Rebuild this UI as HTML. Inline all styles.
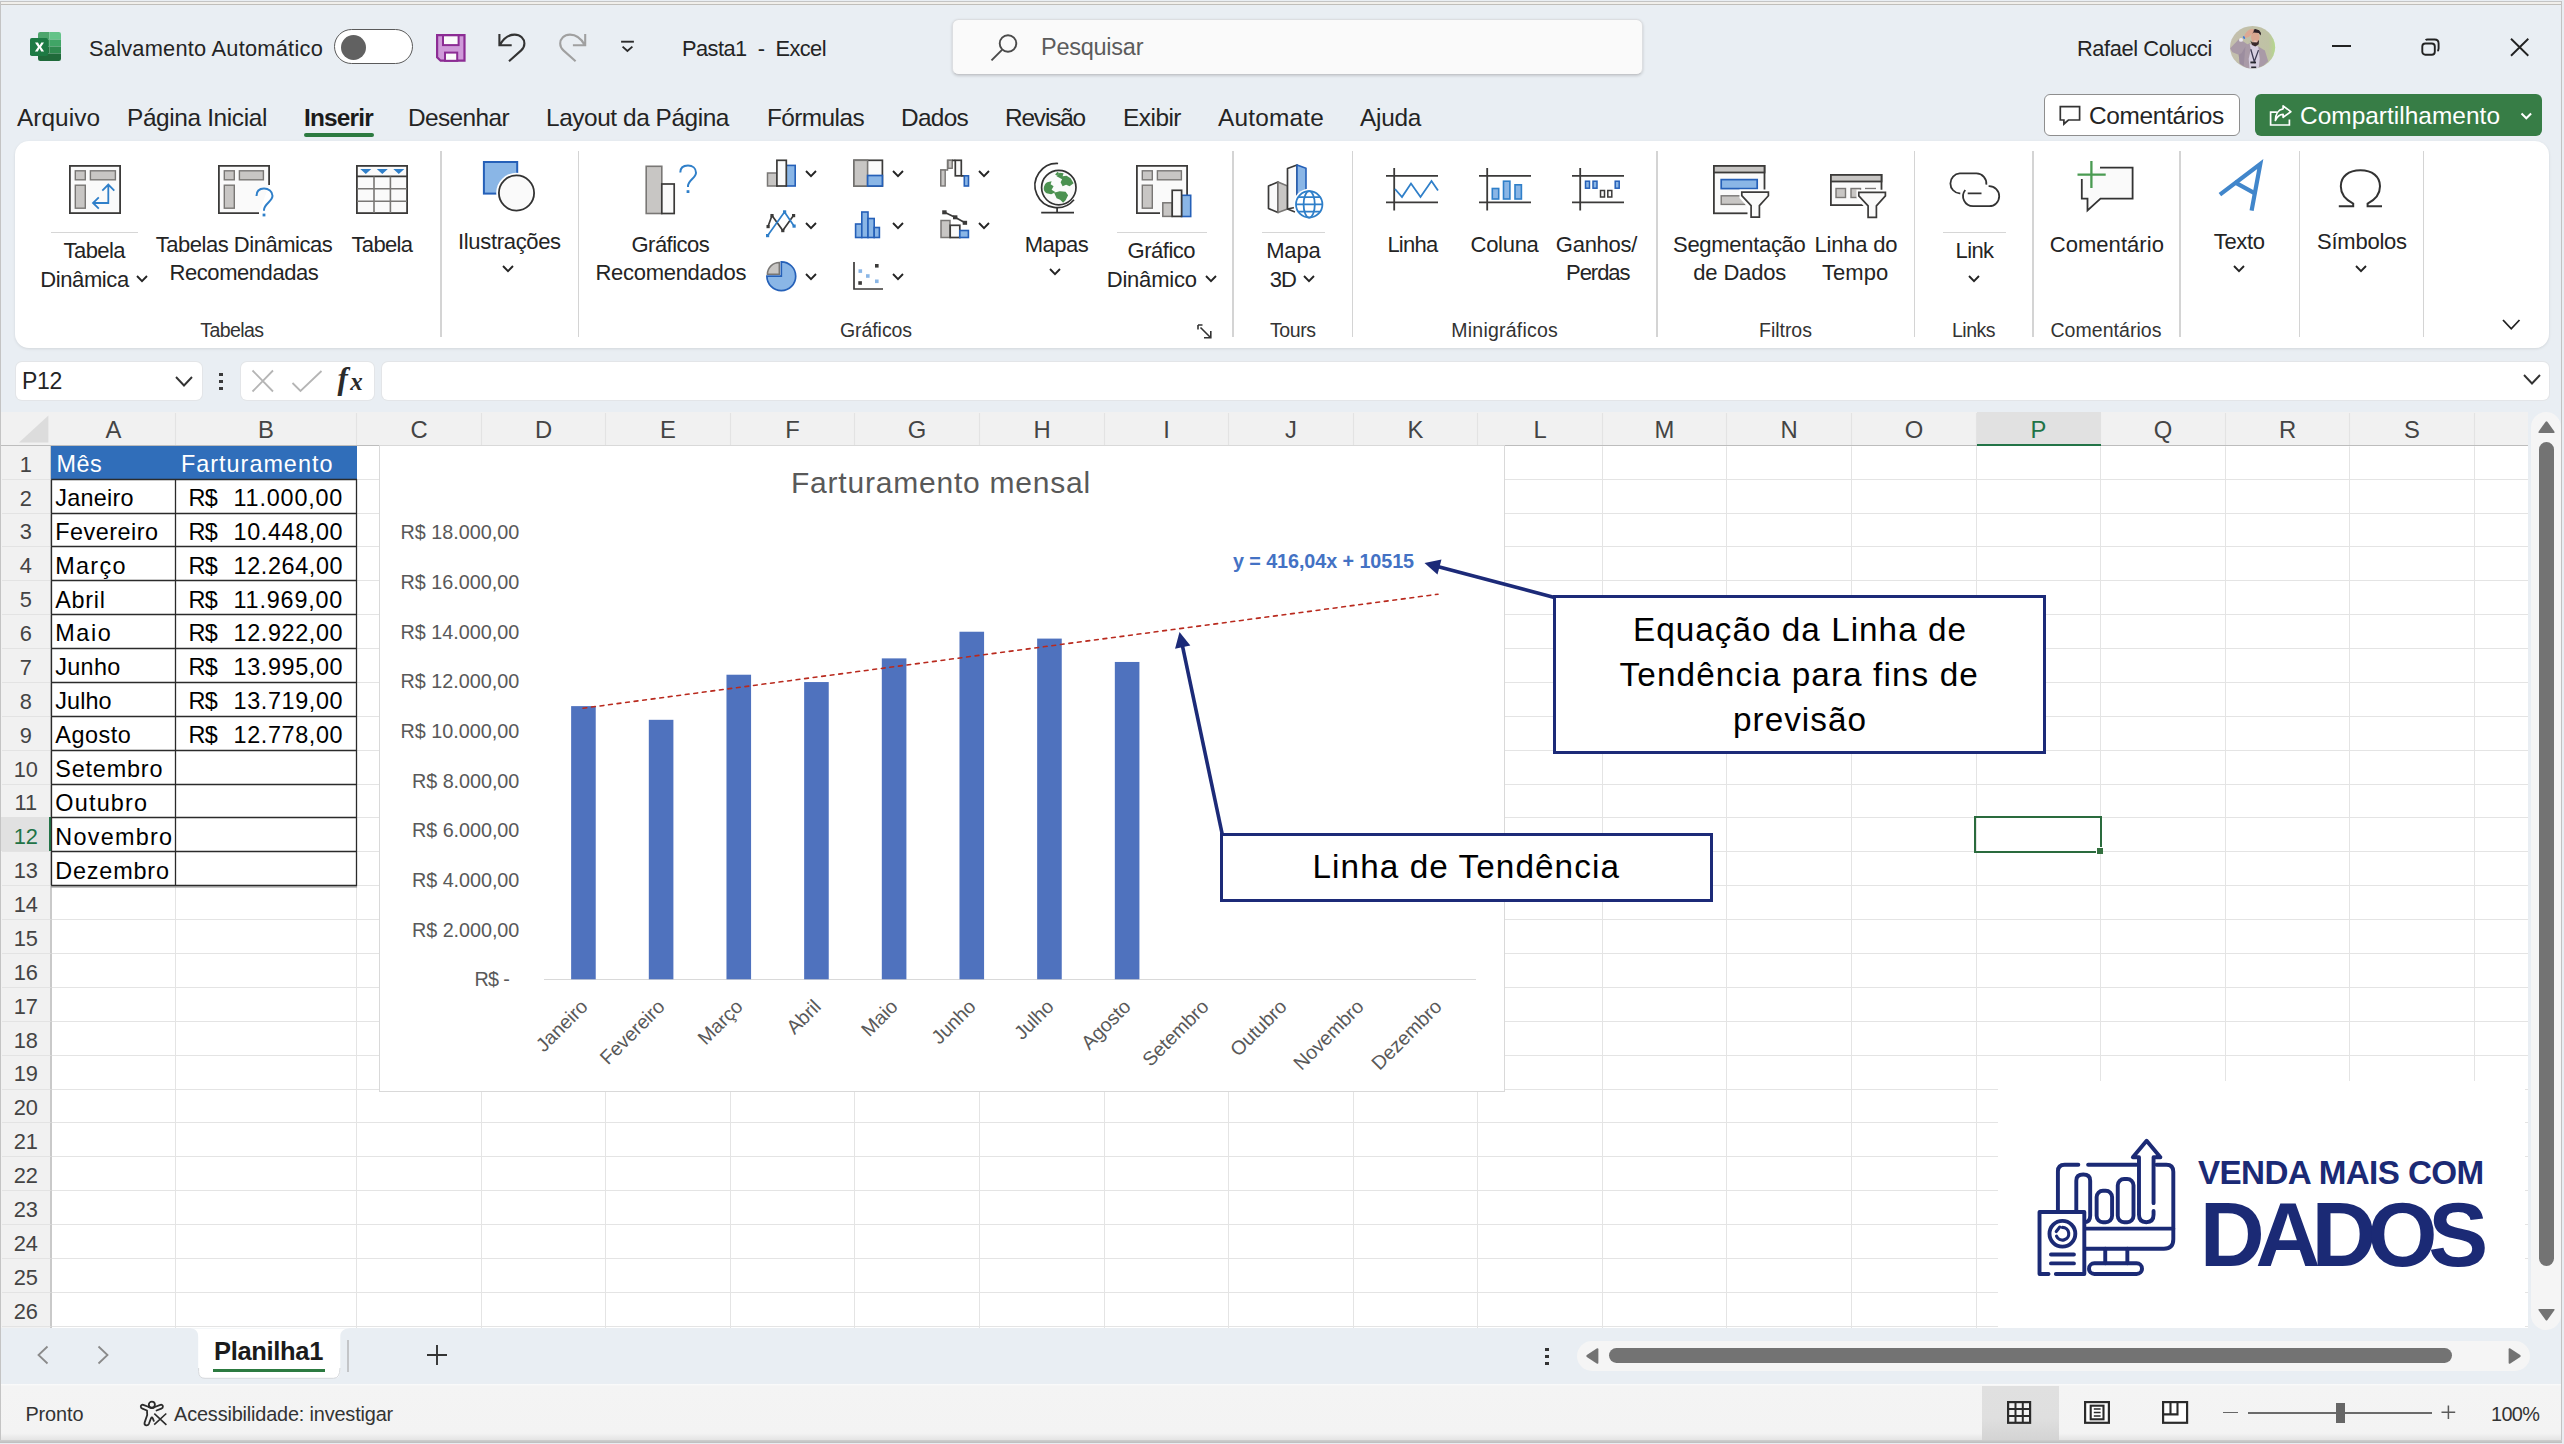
<!DOCTYPE html>
<html><head><meta charset="utf-8"><title>Excel</title>
<style>

html,body{margin:0;padding:0;}
body{width:2564px;height:1444px;overflow:hidden;position:relative;background:#e9eef3;font-family:"Liberation Sans",sans-serif;}
body>div,body>svg,body>span{position:absolute;}
.t{white-space:pre;line-height:1;display:block;}
svg{overflow:visible;}

</style></head>
<body>
<div style="left:0px;top:1px;width:2562px;height:1px;background:#c4c4c4;"></div>
<div style="left:1px;top:2px;width:2560.5px;height:2px;background:#f1efeb;"></div>
<div style="left:1px;top:4px;width:2560.5px;height:1px;background:#c0beba;"></div>
<div style="left:0px;top:1px;width:1px;height:1442px;background:#c4c4c4;"></div>
<svg style="left:30px;top:32px" width="32" height="30" viewBox="0 0 32 30">
<defs><clipPath id="xl"><rect x="8" y="0" width="23" height="29" rx="2.2"/></clipPath></defs>
<g clip-path="url(#xl)">
<rect x="8" y="0" width="11.5" height="7.5" fill="#4da56c"/><rect x="19.5" y="0" width="11.5" height="7.5" fill="#63c388"/>
<rect x="8" y="7.5" width="11.5" height="7" fill="#2e8a4f"/><rect x="19.5" y="7.5" width="11.5" height="7" fill="#40a566"/>
<rect x="8" y="14.5" width="11.5" height="7" fill="#23733f"/><rect x="19.5" y="14.5" width="11.5" height="7" fill="#2e8a4f"/>
<rect x="8" y="21.5" width="23" height="7.5" fill="#1f6a3a"/></g>
<rect x="0" y="6" width="18" height="18" rx="1.8" fill="#1d7a44"/>
<path d="M5 10.5 L8 10.5 L9.6 13.6 L11.3 10.5 L14 10.5 L11 15 L14.1 19.6 L11.2 19.6 L9.5 16.3 L7.8 19.6 L4.9 19.6 L8 15 Z" fill="#fff"/>
</svg>
<span class="t" style="top:37.55px;font-size:21.8px;color:#242424;left:89.00px;letter-spacing:0.238px;">Salvamento Automático</span>
<div style="left:334px;top:29px;width:79px;height:35px;box-sizing:border-box;border:1.5px solid #5a5a5a;border-radius:18px;background:#fff;"></div>
<div style="left:340.5px;top:34.5px;width:25px;height:25px;border-radius:50%;background:#616161;"></div>
<svg style="left:436.4px;top:34px" width="29.6" height="27.8" viewBox="0 0 29.6 27.8">
<path d="M1.1 1.1 H28.5 V26.7 H4.6 L1.1 23.4 Z" fill="#cf9ad9" stroke="#8c2c94" stroke-width="2.2" stroke-linejoin="miter"/>
<rect x="7" y="1.3" width="15.6" height="9.8" fill="#fbfbfb" stroke="#8c2c94" stroke-width="2"/>
<rect x="9" y="18.6" width="12.2" height="8.2" fill="#fbfbfb" stroke="#8c2c94" stroke-width="2"/>
</svg>
<svg style="left:497px;top:32px" width="30" height="32" viewBox="0 0 30 32" fill="none" stroke="#333" stroke-width="2.1"><path d="M2.4 2 V13.3 H14.7 M2.9 12.9 C6.5 6.5 11.5 2.6 17.6 2.6 C23.5 2.6 27.4 6.6 27.4 11.6 C27.4 14.5 26.2 16.6 24.2 18.4 L12 29.2"/></svg>
<svg style="left:558px;top:32px" width="30" height="32" viewBox="0 0 30 32" fill="none" stroke="#a0a0a0" stroke-width="2.1"><path transform="translate(29.6 0) scale(-1 1)" d="M2.4 2 V13.3 H14.7 M2.9 12.9 C6.5 6.5 11.5 2.6 17.6 2.6 C23.5 2.6 27.4 6.6 27.4 11.6 C27.4 14.5 26.2 16.6 24.2 18.4 L12 29.2"/></svg>
<svg style="left:620px;top:39px" width="15" height="14" viewBox="0 0 15 14" fill="none" stroke="#2b2b2b" stroke-width="1.9">
<path d="M1.1 2.7 H13.9"/><path d="M2.6 7.6 L7.4 11.9 L12.4 7.6"/></svg>
<span class="t" style="top:37.55px;font-size:21.8px;color:#242424;left:682.00px;letter-spacing:-0.541px;">Pasta1  -  Excel</span>
<div style="left:952px;top:19.3px;width:691px;height:55.4px;box-sizing:border-box;background:#fafafa;border:1px solid #dcdee1;border-bottom:1.3px solid #c4c6ca;border-radius:6.5px;box-shadow:0 1px 3px rgba(0,0,0,.16);"></div>
<svg style="left:990.2px;top:32.7px" width="29" height="29" viewBox="0 0 29 29" fill="none" stroke="#4a4a4a" stroke-width="1.9">
<circle cx="18" cy="10.5" r="8.3"/><path d="M12 16.8 L1.5 27.3"/></svg>
<span class="t" style="top:35.61px;font-size:23.5px;color:#5c5c5c;left:1041.00px;letter-spacing:-0.256px;">Pesquisar</span>
<span class="t" style="top:37.55px;font-size:21.8px;color:#242424;left:2077.00px;letter-spacing:-0.395px;">Rafael Colucci</span>
<svg style="left:2229.9px;top:25.7px" width="45.2" height="42.6" viewBox="0 0 45.2 42.6" preserveAspectRatio="none">
<defs><clipPath id="av"><ellipse cx="22.6" cy="21.3" rx="22.6" ry="21.3"/></clipPath>
<linearGradient id="avg" x1="0" x2="1" y1="0" y2="0"><stop offset="0" stop-color="#c4bfae"/><stop offset="0.84" stop-color="#bfc2a4"/><stop offset="1" stop-color="#b3dc88"/></linearGradient></defs>
<g clip-path="url(#av)"><rect width="46" height="43" fill="url(#avg)"/>
<path d="M0.0 22.4 L9.1 12.9 L13.7 15.8 L17.4 18.3 L20.4 17.0 L21.2 22.9 L28.3 20.4 L34.9 24.5 L38.2 35.3 L33.7 39.5 L26.2 42.4 L17.0 42.4 L9.6 37.4 L8.7 28.7 L2.5 26.2 Z" fill="#a99aa7"/>
<path d="M8.7 28.7 L9.6 37.4 L13.7 40.3 L15.4 20.4 L11.6 27.0 Z" fill="#94869a" opacity=".6"/>
<path d="M19.7 17.9 L28.3 20.4 L29.7 32.8 L28.7 42.4 L19.5 42.4 L18.7 32.8 L20.8 23.3 Z" fill="#d7cfe0"/>
<path d="M20.8 23.3 L24.3 35.7 L28.5 24.1" fill="none" stroke="#3c3a52" stroke-width="1.3"/>
<rect x="20.4" y="35.5" width="5.6" height="1.9" fill="#2a2931"/>
<rect x="21.2" y="40.5" width="5" height="1.6" fill="#2a2931"/>
<ellipse cx="25.3" cy="11.2" rx="4.3" ry="5.6" fill="#d8a690"/>
<path d="M20.4 14.5 L22.0 16.2 L27.0 16.6 L29.1 13.7 L28.7 18.3 L25.3 20.4 L22.0 19.1 Z" fill="#3a2a2c"/>
<ellipse cx="25.3" cy="15.3" rx="1.9" ry="0.8" fill="#e9c6bd"/>
<path d="M21.2 7.9 L22.0 4.6 L25.3 3.1 L29.1 4.2 L31.0 7.1 L30.7 9.6 L28.7 7.1 L23.7 6.6 Z" fill="#2b2027"/>
<ellipse cx="19.1" cy="7.3" rx="6" ry="2.6" transform="rotate(-42 19.1 7.3)" fill="#dca893"/>
<ellipse cx="11.0" cy="13.9" rx="2" ry="1.9" fill="#ebe7ee"/>
<ellipse cx="14.0" cy="11.6" rx="1" ry="1.6" transform="rotate(-30 14.0 11.6)" fill="#4a7fd2"/>
</g></svg>
<div style="left:2332px;top:45.3px;width:19px;height:1.6px;background:#222;"></div>
<svg style="left:2420px;top:37px" width="21" height="21" viewBox="0 0 21 21" fill="none" stroke="#222" stroke-width="1.9">
<rect x="2.3" y="6.5" width="12.5" height="11.3" rx="3"/><path d="M5.6 3.2 Q6.3 2.5 7.5 2.5 H14.6 Q18.6 2.5 18.6 6.5 V11.5 Q18.6 13.3 17.4 13.9"/></svg>
<svg style="left:2510px;top:38px" width="20" height="19" viewBox="0 0 20 19" fill="none" stroke="#222" stroke-width="1.9">
<path d="M1 0.8 L18.3 17.7 M18.3 0.8 L1 17.7"/></svg>
<span class="t" style="top:105.55px;font-size:24.4px;color:#242424;left:17.00px;letter-spacing:0.042px;">Arquivo</span>
<span class="t" style="top:105.55px;font-size:24.4px;color:#242424;left:127.00px;letter-spacing:-0.364px;">Página Inicial</span>
<span class="t" style="top:105.55px;font-size:24.4px;color:#242424;left:408.00px;letter-spacing:-0.596px;">Desenhar</span>
<span class="t" style="top:105.55px;font-size:24.4px;color:#242424;left:546.00px;letter-spacing:-0.430px;">Layout da Página</span>
<span class="t" style="top:105.55px;font-size:24.4px;color:#242424;left:767.00px;letter-spacing:-0.582px;">Fórmulas</span>
<span class="t" style="top:105.55px;font-size:24.4px;color:#242424;left:901.00px;letter-spacing:-0.703px;">Dados</span>
<span class="t" style="top:105.55px;font-size:24.4px;color:#242424;left:1005.00px;letter-spacing:-1.161px;">Revisão</span>
<span class="t" style="top:105.55px;font-size:24.4px;color:#242424;left:1123.00px;letter-spacing:-0.500px;">Exibir</span>
<span class="t" style="top:105.55px;font-size:24.4px;color:#242424;left:1218.00px;letter-spacing:0.199px;">Automate</span>
<span class="t" style="top:105.55px;font-size:24.4px;color:#242424;left:1360.00px;letter-spacing:-0.278px;">Ajuda</span>
<span class="t" style="top:105.55px;font-size:24.4px;color:#1b1b1b;font-weight:700;left:304.00px;letter-spacing:-0.797px;">Inserir</span>
<div style="left:304px;top:132.8px;width:70px;height:3.8px;background:#2c7a40;border-radius:2px;"></div>
<div style="left:2044px;top:94px;width:196px;height:42px;box-sizing:border-box;background:#fff;border:1.5px solid #8e8e8e;border-radius:6px;"></div>
<svg style="left:2059px;top:105px" width="22" height="22" viewBox="0 0 22 22" fill="none" stroke="#333" stroke-width="1.7" stroke-linejoin="miter">
<path d="M1.3 1.6 H20.6 V15 H9.4 L4.9 19 V15 H1.3 Z"/></svg>
<span class="t" style="top:104.35px;font-size:24.4px;color:#242424;left:2089.00px;letter-spacing:-0.298px;">Comentários</span>
<div style="left:2255px;top:94px;width:287px;height:42px;background:#377d46;border-radius:6px;"></div>
<svg style="left:2268px;top:104px" width="25" height="24" viewBox="0 0 25 24" fill="none" stroke="#fff" stroke-width="1.7" stroke-linejoin="miter">
<path d="M8.9 8.1 H2.6 V21 H21.4 V15.4"/>
<path d="M15.1 1.8 L22.8 7.7 L15.1 13.3 V10.3 C11.5 10.3 9 12.5 7.4 16.4 C7.4 10 10.5 5.5 15.1 4.8 Z" stroke-linejoin="round"/></svg>
<span class="t" style="top:104.35px;font-size:24.4px;color:#fff;left:2300.00px;letter-spacing:0.044px;">Compartilhamento</span>
<svg style="left:2520px;top:112px" width="13" height="9" viewBox="0 0 13 9" fill="none" stroke="#fff" stroke-width="2"><path d="M1.5 1.5 L6.3 6.3 L11.1 1.5"/></svg>
<div style="left:15px;top:141.4px;width:2534px;height:206.6px;background:#fff;border-radius:14px;box-shadow:0 1px 3px rgba(0,0,0,.10);"></div>
<div style="left:440.0px;top:151px;width:1.6px;height:186px;background:#d4d4d4;"></div>
<div style="left:577.7px;top:151px;width:1.6px;height:186px;background:#d4d4d4;"></div>
<div style="left:1232.3px;top:151px;width:1.6px;height:186px;background:#d4d4d4;"></div>
<div style="left:1351.8px;top:151px;width:1.6px;height:186px;background:#d4d4d4;"></div>
<div style="left:1656.1000000000001px;top:151px;width:1.6px;height:186px;background:#d4d4d4;"></div>
<div style="left:1913.7px;top:151px;width:1.6px;height:186px;background:#d4d4d4;"></div>
<div style="left:2032.4px;top:151px;width:1.6px;height:186px;background:#d4d4d4;"></div>
<div style="left:2179.2px;top:151px;width:1.6px;height:186px;background:#d4d4d4;"></div>
<div style="left:2298.7px;top:151px;width:1.6px;height:186px;background:#d4d4d4;"></div>
<div style="left:2422.7px;top:151px;width:1.6px;height:186px;background:#d4d4d4;"></div>
<svg style="left:68.5px;top:165px" width="52" height="49" viewBox="0 0 52 49" ><rect x="0.9" y="0.9" width="50.2" height="47.2" fill="#fafafa" stroke="#3b3a39" stroke-width="1.8"/>
<rect x="6.3" y="5.8" width="10" height="9" fill="#c8c6c4" stroke="#797775" stroke-width="1.4"/>
<rect x="21.4" y="5.8" width="25" height="9" fill="#c8c6c4" stroke="#797775" stroke-width="1.4"/>
<rect x="6.3" y="20.2" width="10" height="23" fill="#c8c6c4" stroke="#797775" stroke-width="1.4"/><path d="M39.3 19.8 V38 H24.3 M33.3 25.7 L39.3 19.6 L45.3 25.7 M29.8 32.3 L24 38 L29.8 43.7" fill="none" stroke="#2f7fc9" stroke-width="1.8"/></svg>
<div style="left:51px;top:231.6px;width:86.80000000000001px;height:1.3px;background:#d6d6d6;"></div>
<span class="t" style="top:240.48px;font-size:22px;color:#242424;left:63.60px;letter-spacing:-0.574px;">Tabela</span>
<span class="t" style="top:268.88px;font-size:22px;color:#242424;left:40.20px;letter-spacing:-0.388px;">Dinâmica</span>
<svg style="left:135.7px;top:275.2px" width="12" height="7.2" viewBox="-1 -1 12 7.2" fill="none" stroke="#242424" stroke-width="1.9"><path d="M0 0 L5.0 5.2 L10 0"/></svg>
<svg style="left:218.4px;top:165px" width="58" height="54" viewBox="0 0 58 54" ><path d="M51.1 20 V0.9 H0.9 V48.1 H41" fill="#fafafa" stroke="#3b3a39" stroke-width="1.8"/>
<rect x="6.3" y="5.8" width="10" height="9" fill="#c8c6c4" stroke="#797775" stroke-width="1.4"/>
<rect x="21.4" y="5.8" width="24" height="9" fill="#c8c6c4" stroke="#797775" stroke-width="1.4"/>
<rect x="6.3" y="20.2" width="10" height="23" fill="#c8c6c4" stroke="#797775" stroke-width="1.4"/>
<path d="M38.5 31 C38.5 26 41.5 23.5 46 23.5 C50.5 23.5 54.5 26.3 54.5 30.8 C54.5 36.5 46 38.5 46 45 V45.8" fill="none" stroke="#2f7fc9" stroke-width="2"/>
<rect x="44.6" y="48.6" width="2.8" height="2.8" fill="#2f7fc9"/></svg>
<span class="t" style="top:233.98px;font-size:22px;color:#242424;left:155.80px;letter-spacing:-0.485px;">Tabelas Dinâmicas</span>
<span class="t" style="top:262.28px;font-size:22px;color:#242424;left:169.60px;letter-spacing:-0.451px;">Recomendadas</span>
<svg style="left:356.3px;top:165px" width="52" height="49" viewBox="0 0 52 49" ><rect x="0.9" y="0.9" width="50.2" height="47.2" fill="#fafafa" stroke="#3b3a39" stroke-width="1.8"/>
<path d="M1 11.3 H51" stroke="#3b3a39" stroke-width="1.8"/>
<path d="M1 23.8 H51 M1 36.2 H51 M18 11.5 V48 M34.4 11.5 V48" stroke="#797775" stroke-width="1.6" fill="none"/>
<path d="M4.3 4 H15.3 L9.8 9 Z M20.8 4 H31.8 L26.3 9 Z M37.3 4 H48.3 L42.8 9 Z" fill="#2f7fc9"/></svg>
<span class="t" style="top:233.98px;font-size:22px;color:#242424;left:351.40px;letter-spacing:-0.624px;">Tabela</span>
<span class="t" style="top:320.89px;font-size:19.5px;color:#333;left:200.30px;letter-spacing:-0.588px;">Tabelas</span>
<svg style="left:482px;top:160px" width="56" height="54" viewBox="0 0 56 54" ><rect x="1.9" y="2" width="33.3" height="31.6" fill="#8ab6e6" stroke="#2560b8" stroke-width="2"/>
<circle cx="34.5" cy="33" r="20.3" fill="#fff"/>
<circle cx="34.5" cy="33" r="17.6" fill="#fafafa" stroke="#333" stroke-width="1.8"/></svg>
<span class="t" style="top:230.88px;font-size:22px;color:#242424;left:458.00px;letter-spacing:-0.326px;">Ilustrações</span>
<svg style="left:502.1px;top:265.2px" width="12" height="7.2" viewBox="-1 -1 12 7.2" fill="none" stroke="#242424" stroke-width="1.9"><path d="M0 0 L5.0 5.2 L10 0"/></svg>
<svg style="left:644px;top:164px" width="56" height="52" viewBox="0 0 56 52" ><rect x="2.2" y="2.3" width="15.6" height="47.2" fill="#c8c6c4" stroke="#797775" stroke-width="1.6"/>
<rect x="17.8" y="20" width="12.4" height="29.5" fill="#fafafa" stroke="#3b3a39" stroke-width="1.7"/>
<path d="M36.3 8.5 C36.3 3.8 39.5 1.5 44 1.5 C48.5 1.5 52 4.2 52 8.7 C52 14 44 16 44 22 V23" fill="none" stroke="#2f7fc9" stroke-width="2"/>
<rect x="42.6" y="26.2" width="2.8" height="2.8" fill="#2f7fc9"/></svg>
<span class="t" style="top:233.98px;font-size:22px;color:#242424;left:631.50px;letter-spacing:-0.528px;">Gráficos</span>
<span class="t" style="top:262.28px;font-size:22px;color:#242424;left:595.40px;letter-spacing:-0.276px;">Recomendados</span>
<svg style="left:766px;top:158px" width="32" height="30" viewBox="0 0 32 30" ><rect x="1.5" y="15" width="10" height="13" fill="#c8c6c4" stroke="#797775" stroke-width="1.5"/>
<rect x="20.2" y="7.4" width="9" height="20.6" fill="#8ab6e6" stroke="#2560b8" stroke-width="1.6"/>
<rect x="10.9" y="2.3" width="9.4" height="25.7" fill="#fafafa" stroke="#3b3a39" stroke-width="1.7"/></svg>
<svg style="left:804.9px;top:170.4px" width="12" height="7.2" viewBox="-1 -1 12 7.2" fill="none" stroke="#242424" stroke-width="1.9"><path d="M0 0 L5.0 5.2 L10 0"/></svg>
<svg style="left:765px;top:209px" width="34" height="30" viewBox="0 0 34 30" ><path d="M3 17.5 L7 6.5 L17.8 21.5 L28.5 6.5" fill="none" stroke="#3b3a39" stroke-width="1.7"/>
<path d="M2.7 26.5 L19.5 3 L29 17" fill="none" stroke="#2f7fc9" stroke-width="1.7"/>
<g fill="#3b3a39"><rect x="1.5" y="16" width="3.2" height="3.2"/><rect x="5.4" y="5" width="3.2" height="3.2"/><rect x="16.2" y="20" width="3.2" height="3.2"/><rect x="27" y="5" width="3.2" height="3.2"/></g>
<g fill="#2f7fc9"><rect x="1" y="25" width="3.2" height="3.2"/><rect x="18" y="1.3" width="3.2" height="3.2"/><rect x="27.5" y="15.5" width="3.2" height="3.2"/></g></svg>
<svg style="left:804.9px;top:221.7px" width="12" height="7.2" viewBox="-1 -1 12 7.2" fill="none" stroke="#242424" stroke-width="1.9"><path d="M0 0 L5.0 5.2 L10 0"/></svg>
<svg style="left:765px;top:260px" width="34" height="32" viewBox="0 0 34 32" ><path d="M16.3 16.2 V1.8 A14.4 14.4 0 1 1 1.9 16.2 Z" fill="#8ab6e6" stroke="#2560b8" stroke-width="1.7"/>
<path d="M14.3 14.2 V2.4 A12 12 0 0 0 2.4 14.2 Z" fill="#c8c6c4" stroke="#797775" stroke-width="1.5"/></svg>
<svg style="left:804.9px;top:273.0px" width="12" height="7.2" viewBox="-1 -1 12 7.2" fill="none" stroke="#242424" stroke-width="1.9"><path d="M0 0 L5.0 5.2 L10 0"/></svg>
<svg style="left:852px;top:158px" width="32" height="30" viewBox="0 0 32 30" ><rect x="2" y="2.3" width="28.4" height="25.7" fill="#fafafa" stroke="#3b3a39" stroke-width="1.7"/>
<rect x="2" y="2.3" width="13.6" height="25.7" fill="#c8c6c4" stroke="#797775" stroke-width="1.6"/>
<rect x="15.6" y="17.5" width="14.8" height="10.5" fill="#8ab6e6" stroke="#2560b8" stroke-width="1.7"/></svg>
<svg style="left:891.5px;top:170.4px" width="12" height="7.2" viewBox="-1 -1 12 7.2" fill="none" stroke="#242424" stroke-width="1.9"><path d="M0 0 L5.0 5.2 L10 0"/></svg>
<svg style="left:853px;top:209px" width="30" height="31" viewBox="0 0 30 31" ><g fill="#8ab6e6" stroke="#2560b8" stroke-width="1.6"><rect x="2.6" y="15" width="6.2" height="13.5"/><rect x="8.8" y="3" width="6.2" height="25.5"/><rect x="15" y="9.5" width="6.2" height="19"/><rect x="21.2" y="18.5" width="5.2" height="10"/></g></svg>
<svg style="left:891.5px;top:221.7px" width="12" height="7.2" viewBox="-1 -1 12 7.2" fill="none" stroke="#242424" stroke-width="1.9"><path d="M0 0 L5.0 5.2 L10 0"/></svg>
<svg style="left:852px;top:261px" width="32" height="30" viewBox="0 0 32 30" ><path d="M2 1 V28 H31" fill="none" stroke="#3b3a39" stroke-width="1.7"/>
<g fill="#3b3a39"><rect x="23" y="3" width="3.6" height="3.6"/><rect x="6.3" y="20.2" width="3.6" height="3.6"/></g>
<g fill="#8ab6e6"><rect x="6.5" y="8.3" width="3.6" height="3.6"/><rect x="14" y="13.2" width="3.6" height="3.6"/><rect x="23" y="18.5" width="3.6" height="3.6"/></g></svg>
<svg style="left:891.5px;top:273.0px" width="12" height="7.2" viewBox="-1 -1 12 7.2" fill="none" stroke="#242424" stroke-width="1.9"><path d="M0 0 L5.0 5.2 L10 0"/></svg>
<svg style="left:939px;top:158px" width="32" height="30" viewBox="0 0 32 30" ><path d="M1.8 28 V12 H8.5 V2.3 H13.2 V9.5 H8.5" fill="none" stroke="#797775" stroke-width="1.5"/>
<rect x="1.8" y="12" width="4.4" height="16" fill="#c8c6c4" stroke="#797775" stroke-width="1.4"/>
<rect x="9" y="2.3" width="4.2" height="8" fill="#c8c6c4" stroke="#797775" stroke-width="1.4"/>
<rect x="16.3" y="2.3" width="6" height="15.5" fill="#fafafa" stroke="#3b3a39" stroke-width="1.7"/>
<path d="M13.2 2.3 H16.3 M22.3 17.8 H25.5" stroke="#3b3a39" stroke-width="1.7"/>
<rect x="25.3" y="17.8" width="4.2" height="10.2" fill="#8ab6e6" stroke="#2560b8" stroke-width="1.6"/></svg>
<svg style="left:978.0px;top:170.4px" width="12" height="7.2" viewBox="-1 -1 12 7.2" fill="none" stroke="#242424" stroke-width="1.9"><path d="M0 0 L5.0 5.2 L10 0"/></svg>
<svg style="left:939px;top:209px" width="32" height="31" viewBox="0 0 32 31" ><rect x="2" y="11.5" width="9" height="17" fill="#c8c6c4" stroke="#797775" stroke-width="1.5"/>
<rect x="11.2" y="16.3" width="9.6" height="12.2" fill="#fafafa" stroke="#3b3a39" stroke-width="1.7"/>
<rect x="20.8" y="21.5" width="8.6" height="7" fill="#8ab6e6" stroke="#2560b8" stroke-width="1.6"/>
<path d="M5.5 3.3 L16.5 8.5 L26 13.8" fill="none" stroke="#3b3a39" stroke-width="1.7"/>
<g fill="#3b3a39"><rect x="3.2" y="1.3" width="4.4" height="4"/><rect x="14" y="6.3" width="4.4" height="4"/><rect x="23.7" y="11.8" width="4.4" height="4"/></g></svg>
<svg style="left:978.0px;top:221.7px" width="12" height="7.2" viewBox="-1 -1 12 7.2" fill="none" stroke="#242424" stroke-width="1.9"><path d="M0 0 L5.0 5.2 L10 0"/></svg>
<svg style="left:1032px;top:161px" width="48" height="54" viewBox="0 0 48 54" ><circle cx="26.8" cy="26.6" r="17.2" fill="#fafafa" stroke="#333" stroke-width="1.7"/>
<g fill="#4b9150" transform="translate(0.6 2.3)"><path d="M12 22 C13 19 16 18.5 19 18 L18 21 L21 23 L19 26.5 L23 29 L18.5 31 L14 30 C11 28 10.5 25 12 22Z"/>
<path d="M24 13 L27 9.5 L31 10 L30 13 L34 12.5 L38 15 L41 20 L37 23 L33.5 21.5 L30 23 L28 19 L29.5 16 Z"/>
<path d="M21.5 29.5 L27 28 L33 28.5 L35.5 32 L33 37 L30.5 39.5 L27.5 36.5 L24 35 Z"/><path d="M22.5 11.2 l2.5 -2.7 l1.5 1.5 l-2 2.5z"/></g>
<path d="M26.1 2.5 A22.1 22.1 0 1 0 42 38.8" fill="none" stroke="#333" stroke-width="1.7"/>
<path d="M25.1 46.7 V51.7 M9.2 51.7 H42" stroke="#333" stroke-width="1.7"/></svg>
<span class="t" style="top:233.98px;font-size:22px;color:#242424;left:1024.80px;letter-spacing:-0.529px;">Mapas</span>
<svg style="left:1049.2px;top:268.4px" width="12" height="7.2" viewBox="-1 -1 12 7.2" fill="none" stroke="#242424" stroke-width="1.9"><path d="M0 0 L5.0 5.2 L10 0"/></svg>
<svg style="left:1135.7px;top:165px" width="57" height="54" viewBox="0 0 57 54" ><path d="M51.1 30 V0.9 H0.9 V48.1 H24" fill="#fafafa" stroke="#3b3a39" stroke-width="1.8"/>
<rect x="6.3" y="5.8" width="10" height="9" fill="#c8c6c4" stroke="#797775" stroke-width="1.4"/>
<rect x="21.4" y="5.8" width="24" height="9" fill="#c8c6c4" stroke="#797775" stroke-width="1.4"/>
<rect x="6.3" y="20.2" width="10" height="23" fill="#c8c6c4" stroke="#797775" stroke-width="1.4"/>
<rect x="26.8" y="37.8" width="9.4" height="13.6" fill="#c8c6c4" stroke="#797775" stroke-width="1.5"/>
<rect x="45.5" y="30.3" width="9.2" height="21.2" fill="#8ab6e6" stroke="#2560b8" stroke-width="1.6"/>
<rect x="36.2" y="25.3" width="9.4" height="26.1" fill="#fafafa" stroke="#3b3a39" stroke-width="1.7"/></svg>
<div style="left:1117.2px;top:231.6px;width:89.39999999999986px;height:1.3px;background:#d6d6d6;"></div>
<span class="t" style="top:240.48px;font-size:22px;color:#242424;left:1127.50px;letter-spacing:-0.475px;">Gráfico</span>
<span class="t" style="top:268.88px;font-size:22px;color:#242424;left:1106.70px;letter-spacing:-0.200px;">Dinâmico</span>
<svg style="left:1204.6px;top:275.2px" width="12" height="7.2" viewBox="-1 -1 12 7.2" fill="none" stroke="#242424" stroke-width="1.9"><path d="M0 0 L5.0 5.2 L10 0"/></svg>
<span class="t" style="top:320.89px;font-size:19.5px;color:#333;left:840.00px;letter-spacing:-0.076px;">Gráficos</span>
<svg style="left:1197px;top:323.5px" width="16" height="16" viewBox="0 0 16 16" ><path d="M1 1 H5.5 M1 1 V5.5 M3.5 3.5 L13.5 13.5 M7 13.8 H13.8 V7" fill="none" stroke="#333" stroke-width="1.6"/></svg>
<svg style="left:1266px;top:163px" width="60" height="57" viewBox="0 0 60 57" ><path d="M2.5 23 L12 19 V49.5 L2.5 45.5 Z" fill="#fafafa" stroke="#3b3a39" stroke-width="1.7" stroke-linejoin="round"/>
<path d="M12 19 L21.5 23 V46 L12 49.5 Z" fill="#c8c6c4" stroke="#797775" stroke-width="1.5" stroke-linejoin="round"/>
<path d="M21.5 5.5 L31 2 V44 L21.5 46 Z" fill="#fafafa" stroke="#3b3a39" stroke-width="1.7" stroke-linejoin="round"/>
<path d="M31 2 L40 5.2 V40 L31 44 Z" fill="#8ab6e6" stroke="#2560b8" stroke-width="1.6" stroke-linejoin="round"/>
<path d="M21.5 46 L29 49" stroke="#3b3a39" stroke-width="1.7"/>
<circle cx="43.2" cy="41.4" r="15.6" fill="#fff"/>
<g fill="none" stroke="#2f7fc9" stroke-width="1.8"><circle cx="43.2" cy="41.4" r="13.2"/><ellipse cx="43.2" cy="41.4" rx="5.6" ry="13.2"/><path d="M30 41.4 H56.4 M32 34.2 H54.4 M32 48.6 H54.4"/></g></svg>
<div style="left:1262px;top:231.6px;width:63.200000000000045px;height:1.3px;background:#d6d6d6;"></div>
<span class="t" style="top:240.48px;font-size:22px;color:#242424;left:1266.20px;letter-spacing:-0.162px;">Mapa</span>
<span class="t" style="top:268.88px;font-size:22px;color:#242424;left:1269.80px;letter-spacing:-1.112px;">3D</span>
<svg style="left:1303.1px;top:275.2px" width="12" height="7.2" viewBox="-1 -1 12 7.2" fill="none" stroke="#242424" stroke-width="1.9"><path d="M0 0 L5.0 5.2 L10 0"/></svg>
<span class="t" style="top:320.89px;font-size:19.5px;color:#333;left:1270.00px;letter-spacing:-0.397px;">Tours</span>
<svg style="left:1386.3px;top:167px" width="54" height="45" viewBox="0 0 54 45" ><path d="M0 8.9 H52 M0 35.4 H52 M8.2 1 V43.6" fill="none" stroke="#3b3a39" stroke-width="1.8"/><path d="M9 22 L16 30 L25 16.5 L34.5 30 L45.5 14 L52 23.5" fill="none" stroke="#2f7fc9" stroke-width="1.8"/></svg>
<svg style="left:1479.2px;top:167px" width="54" height="45" viewBox="0 0 54 45" ><path d="M0 8.9 H52 M0 35.4 H52 M8.2 1 V43.6" fill="none" stroke="#3b3a39" stroke-width="1.8"/><g fill="#8ab6e6" stroke="#2f7fc9" stroke-width="1.6"><rect x="13.3" y="21.5" width="6.4" height="10.5"/><rect x="24.5" y="14.2" width="6.4" height="17.8"/><rect x="36" y="17.8" width="6.4" height="14.2"/></g></svg>
<svg style="left:1572px;top:167px" width="54" height="45" viewBox="0 0 54 45" ><path d="M0 8.9 H52 M0 35.4 H52 M8.2 1 V43.6" fill="none" stroke="#3b3a39" stroke-width="1.8"/><g fill="#8ab6e6" stroke="#2560b8" stroke-width="1.5"><rect x="13.5" y="14.2" width="4" height="7"/><rect x="21" y="14.2" width="4" height="7"/><rect x="43.2" y="14.2" width="4" height="7"/></g><g fill="#fafafa" stroke="#3b3a39" stroke-width="1.5"><rect x="28.5" y="23.5" width="4" height="6.5"/><rect x="35.8" y="23.5" width="4" height="6.5"/></g></svg>
<span class="t" style="top:233.98px;font-size:22px;color:#242424;left:1387.40px;letter-spacing:-0.769px;">Linha</span>
<span class="t" style="top:233.98px;font-size:22px;color:#242424;left:1470.60px;letter-spacing:-0.303px;">Coluna</span>
<span class="t" style="top:233.98px;font-size:22px;color:#242424;left:1555.80px;letter-spacing:-0.253px;">Ganhos/</span>
<span class="t" style="top:262.28px;font-size:22px;color:#242424;left:1566.00px;letter-spacing:-1.036px;">Perdas</span>
<span class="t" style="top:320.89px;font-size:19.5px;color:#333;left:1451.30px;letter-spacing:0.221px;">Minigráficos</span>
<svg style="left:1713.2px;top:165px" width="58" height="54" viewBox="0 0 58 54" ><rect x="0.9" y="0.9" width="50.6" height="47.4" fill="#fafafa" stroke="#3b3a39" stroke-width="1.8"/>
<rect x="0.9" y="0.9" width="50.6" height="6.6" fill="#c8c6c4" stroke="#3b3a39" stroke-width="1.8"/>
<rect x="8.2" y="14.6" width="36" height="9" fill="#8ab6e6" stroke="#2560b8" stroke-width="1.7"/>
<rect x="8.2" y="30.8" width="24" height="8.6" fill="#c8c6c4" stroke="#797775" stroke-width="1.4"/>
<path d="M26.5 24.5 H58 V54 H34.5 V42 L26.5 33 Z" fill="#fff"/><path d="M28.8 27.2 H55.400000000000006 V30.7 L46.400000000000006 40.7 V52.2 H38.1 V40.7 L28.8 30.7 Z" fill="#fafafa" stroke="#3b3a39" stroke-width="1.7" stroke-linejoin="miter"/></svg>
<span class="t" style="top:233.98px;font-size:22px;color:#242424;left:1673.00px;letter-spacing:-0.297px;">Segmentação</span>
<span class="t" style="top:262.28px;font-size:22px;color:#242424;left:1693.30px;letter-spacing:-0.161px;">de Dados</span>
<svg style="left:1830px;top:173.8px" width="58" height="46" viewBox="0 0 58 46" ><rect x="0.9" y="0.9" width="50.6" height="30.2" fill="#fafafa" stroke="#3b3a39" stroke-width="1.8"/>
<rect x="0.9" y="0.9" width="50.6" height="6.6" fill="#c8c6c4" stroke="#3b3a39" stroke-width="1.8"/>
<rect x="6" y="14.5" width="9.5" height="9" fill="#c8c6c4" stroke="#797775" stroke-width="1.4"/>
<rect x="21" y="14.5" width="9.5" height="9" fill="#c8c6c4" stroke="#797775" stroke-width="1.4"/>
<path d="M35 14.5 H46" stroke="#797775" stroke-width="1.4"/>
<path d="M26.5 15.8 H58 V46 H34.5 V33 L26.5 24 Z" fill="#fff"/><path d="M28.8 18.4 H55.400000000000006 V21.9 L46.400000000000006 31.9 V43.4 H38.1 V31.9 L28.8 21.9 Z" fill="#fafafa" stroke="#3b3a39" stroke-width="1.7" stroke-linejoin="miter"/></svg>
<span class="t" style="top:233.98px;font-size:22px;color:#242424;left:1814.40px;letter-spacing:-0.190px;">Linha do</span>
<span class="t" style="top:262.28px;font-size:22px;color:#242424;left:1822.00px;letter-spacing:0.031px;">Tempo</span>
<span class="t" style="top:320.89px;font-size:19.5px;color:#333;left:1759.00px;letter-spacing:-0.028px;">Filtros</span>
<svg style="left:1947px;top:170.5px" width="56" height="38" viewBox="0 0 56 38" ><g fill="none" stroke="#333" stroke-width="1.8"><path d="M13.3 22.4 H12.7 A10 10 0 0 1 12.7 2.45 H29.4 A10 10 0 0 1 39.33 13.6 M20.7 22.4 H34.5"/>
<path d="M41.6 15.2 H42.2 A10 10 0 0 1 42.2 35.2 H26.1 A10 10 0 0 1 18.25 19"/></g></svg>
<div style="left:1942.7px;top:231.6px;width:63.399999999999864px;height:1.3px;background:#d6d6d6;"></div>
<span class="t" style="top:240.48px;font-size:22px;color:#242424;left:1955.50px;letter-spacing:-0.590px;">Link</span>
<svg style="left:1967.6px;top:275.0px" width="12" height="7.2" viewBox="-1 -1 12 7.2" fill="none" stroke="#242424" stroke-width="1.9"><path d="M0 0 L5.0 5.2 L10 0"/></svg>
<span class="t" style="top:320.89px;font-size:19.5px;color:#333;left:1952.00px;letter-spacing:-0.506px;">Links</span>
<svg style="left:2076px;top:160px" width="60" height="54" viewBox="0 0 60 54" ><path d="M24 7.6 H56.6 V38.6 H24.5 L11.5 50.5 V38.6 H5.8 V19" fill="#fafafa" stroke="#333" stroke-width="1.8" stroke-linejoin="miter"/>
<path d="M15.4 1 V28 M1.5 14.6 H29.7" stroke="#4a9b52" stroke-width="2.3" fill="none"/></svg>
<span class="t" style="top:233.98px;font-size:22px;color:#242424;left:2049.70px;letter-spacing:0.058px;">Comentário</span>
<span class="t" style="top:320.89px;font-size:19.5px;color:#333;left:2050.40px;letter-spacing:0.059px;">Comentários</span>
<svg style="left:2217px;top:159px" width="48" height="54" viewBox="0 0 48 54" ><path d="M2.9 35.6 L43.3 5 L34.6 51.6" fill="none" stroke="#4186cb" stroke-width="4.2" stroke-linejoin="miter" stroke-miterlimit="10"/><path d="M17.5 23.2 L37 33.8" stroke="#4186cb" stroke-width="4.2"/></svg>
<span class="t" style="top:230.88px;font-size:22px;color:#242424;left:2213.80px;letter-spacing:-0.359px;">Texto</span>
<svg style="left:2232.8px;top:265.2px" width="12" height="7.2" viewBox="-1 -1 12 7.2" fill="none" stroke="#242424" stroke-width="1.9"><path d="M0 0 L5.0 5.2 L10 0"/></svg>
<svg style="left:2337px;top:168px" width="48" height="42" viewBox="0 0 48 42" ><path d="M1.8 38.2 H16.2 V35.6 C8 31.5 3.8 25.2 3.8 18.3 C3.8 8.5 11.5 2.3 23.4 2.3 C35.3 2.3 43 8.5 43 18.3 C43 25.2 38.8 31.5 30.6 35.6 V38.2 H45" fill="none" stroke="#333" stroke-width="2"/></svg>
<span class="t" style="top:230.88px;font-size:22px;color:#242424;left:2317.00px;letter-spacing:-0.240px;">Símbolos</span>
<svg style="left:2354.5px;top:265.2px" width="12" height="7.2" viewBox="-1 -1 12 7.2" fill="none" stroke="#242424" stroke-width="1.9"><path d="M0 0 L5.0 5.2 L10 0"/></svg>
<svg style="left:2501.8px;top:318.6px" width="18.5" height="10.8" viewBox="-1 -1 18.5 10.8" fill="none" stroke="#222" stroke-width="1.8"><path d="M0 0 L8.25 8.8 L16.5 0"/></svg>
<div style="left:16px;top:362px;width:186px;height:38px;background:#fff;border-radius:6px;box-shadow:0 0 0 1px #e3e5e8;"></div>
<span class="t" style="top:369.83px;font-size:23px;color:#242424;left:22.00px;letter-spacing:-0.312px;">P12</span>
<svg style="left:174.5px;top:376.2px" width="18" height="10.5" viewBox="-1 -1 18 10.5" fill="none" stroke="#333" stroke-width="1.9"><path d="M0 0 L8.0 8.5 L16 0"/></svg>
<div style="left:219.2px;top:372.6px;width:3.9px;height:3.8px;background:#3a3a3a;"></div>
<div style="left:219.2px;top:379.6px;width:3.9px;height:3.8px;background:#3a3a3a;"></div>
<div style="left:219.2px;top:386.6px;width:3.9px;height:3.8px;background:#3a3a3a;"></div>
<div style="left:240.6px;top:362px;width:133.7px;height:38px;background:#fff;border-radius:6px;box-shadow:0 0 0 1px #e3e5e8;"></div>
<svg style="left:251px;top:369px" width="24" height="24" viewBox="0 0 24 24" ><path d="M1.5 1.5 L22 22.5 M22 1.5 L1.5 22.5" stroke="#b5b5b5" stroke-width="1.8" fill="none"/></svg>
<svg style="left:291px;top:369px" width="32" height="24" viewBox="0 0 32 24" ><path d="M1.5 14 L9.5 22 L30.5 2" stroke="#b5b5b5" stroke-width="1.8" fill="none"/></svg>
<span class="t" style="top:363.06px;font-size:31px;color:#2b2b2b;font-weight:700;font-family:'Liberation Serif', serif;font-style:italic;left:337.60px;">f</span>
<span class="t" style="top:368.64px;font-size:25px;color:#2b2b2b;font-weight:700;font-family:'Liberation Serif', serif;font-style:italic;left:350.30px;">x</span>
<div style="left:382.4px;top:362px;width:2166.2px;height:38px;background:#fff;border-radius:6px;box-shadow:0 0 0 1px #e3e5e8;"></div>
<svg style="left:2523.0px;top:374.2px" width="18" height="10.5" viewBox="-1 -1 18 10.5" fill="none" stroke="#333" stroke-width="1.9"><path d="M0 0 L8.0 8.5 L16 0"/></svg>
<div style="left:1px;top:411.9px;width:2527.4px;height:916.1px;background:#fff;"></div>
<div style="left:1px;top:411.9px;width:2527.4px;height:33.3px;background:#f1f1f1;"></div>
<div style="left:1px;top:445px;width:2527.4px;height:1.1px;background:#bdbdbd;"></div>
<div style="left:1px;top:446.1px;width:49.2px;height:881.9px;background:#f1f1f1;"></div>
<div style="left:50.2px;top:446.4px;width:1.5px;height:881.6px;background:#c9c9c9;"></div>
<svg style="left:19px;top:415px" width="30" height="28" viewBox="0 0 30 28" ><path d="M29.4 0.6 V27.6 H0 Z" fill="#dcdcdc"/></svg>
<svg style="left:0;top:0" width="2564" height="1444"><path d="M51.7 479.50 H2528.4 M51.7 513.50 H2528.4 M51.7 546.50 H2528.4 M51.7 580.50 H2528.4 M51.7 614.50 H2528.4 M51.7 648.50 H2528.4 M51.7 682.50 H2528.4 M51.7 716.50 H2528.4 M51.7 750.50 H2528.4 M51.7 784.50 H2528.4 M51.7 817.50 H2528.4 M51.7 851.50 H2528.4 M51.7 885.50 H2528.4 M51.7 919.50 H2528.4 M51.7 953.50 H2528.4 M51.7 987.50 H2528.4 M51.7 1021.50 H2528.4 M51.7 1055.50 H2528.4 M51.7 1089.50 H2528.4 M51.7 1122.50 H2528.4 M51.7 1156.50 H2528.4 M51.7 1190.50 H2528.4 M51.7 1224.50 H2528.4 M51.7 1258.50 H2528.4 M51.7 1292.50 H2528.4 M51.7 1326.50 H2528.4 M175.50 446.4 V1328 M356.50 446.4 V1328 M481.50 446.4 V1328 M605.50 446.4 V1328 M730.50 446.4 V1328 M854.50 446.4 V1328 M979.50 446.4 V1328 M1104.50 446.4 V1328 M1228.50 446.4 V1328 M1353.50 446.4 V1328 M1477.50 446.4 V1328 M1602.50 446.4 V1328 M1726.50 446.4 V1328 M1851.50 446.4 V1328 M1976.50 446.4 V1328 M2100.50 446.4 V1328 M2225.50 446.4 V1328 M2349.50 446.4 V1328 M2474.50 446.4 V1328" stroke="#e4e4e4" stroke-width="1" fill="none"/></svg>
<svg style="left:0;top:0" width="2564" height="1444"><path d="M175.50 413 V445 M356.50 413 V445 M481.50 413 V445 M605.50 413 V445 M730.50 413 V445 M854.50 413 V445 M979.50 413 V445 M1104.50 413 V445 M1228.50 413 V445 M1353.50 413 V445 M1477.50 413 V445 M1602.50 413 V445 M1726.50 413 V445 M1851.50 413 V445 M1976.50 413 V445 M2100.50 413 V445 M2225.50 413 V445 M2349.50 413 V445 M2474.50 413 V445 M2 479.50 H50.6 M2 513.50 H50.6 M2 546.50 H50.6 M2 580.50 H50.6 M2 614.50 H50.6 M2 648.50 H50.6 M2 682.50 H50.6 M2 716.50 H50.6 M2 750.50 H50.6 M2 784.50 H50.6 M2 817.50 H50.6 M2 851.50 H50.6 M2 885.50 H50.6 M2 919.50 H50.6 M2 953.50 H50.6 M2 987.50 H50.6 M2 1021.50 H50.6 M2 1055.50 H50.6 M2 1089.50 H50.6 M2 1122.50 H50.6 M2 1156.50 H50.6 M2 1190.50 H50.6 M2 1224.50 H50.6 M2 1258.50 H50.6 M2 1292.50 H50.6 M2 1326.50 H50.6" stroke="#e3e3e3" stroke-width="1.1" fill="none"/></svg>
<div style="left:1976.5px;top:411.7px;width:124.0px;height:33.5px;background:#e1e1e1;"></div>
<div style="left:1976.5px;top:443.6px;width:124.0px;height:2.8px;background:#227447;"></div>
<div style="left:1px;top:817.0px;width:49px;height:33.88px;background:#e1e1e1;"></div>
<div style="left:49.3px;top:817.0px;width:2.4px;height:33.88px;background:#227447;"></div>
<span class="t" style="top:417.75px;font-size:23.8px;color:#444;left:105.41px;">A</span>
<span class="t" style="top:417.75px;font-size:23.8px;color:#444;left:258.06px;">B</span>
<span class="t" style="top:417.75px;font-size:23.8px;color:#444;left:410.41px;">C</span>
<span class="t" style="top:417.75px;font-size:23.8px;color:#444;left:534.91px;">D</span>
<span class="t" style="top:417.75px;font-size:23.8px;color:#444;left:660.06px;">E</span>
<span class="t" style="top:417.75px;font-size:23.8px;color:#444;left:785.23px;">F</span>
<span class="t" style="top:417.75px;font-size:23.8px;color:#444;left:907.74px;">G</span>
<span class="t" style="top:417.75px;font-size:23.8px;color:#444;left:1033.41px;">H</span>
<span class="t" style="top:417.75px;font-size:23.8px;color:#444;left:1163.19px;">I</span>
<span class="t" style="top:417.75px;font-size:23.8px;color:#444;left:1285.05px;">J</span>
<span class="t" style="top:417.75px;font-size:23.8px;color:#444;left:1407.56px;">K</span>
<span class="t" style="top:417.75px;font-size:23.8px;color:#444;left:1533.38px;">L</span>
<span class="t" style="top:417.75px;font-size:23.8px;color:#444;left:1654.59px;">M</span>
<span class="t" style="top:417.75px;font-size:23.8px;color:#444;left:1780.41px;">N</span>
<span class="t" style="top:417.75px;font-size:23.8px;color:#444;left:1904.74px;">O</span>
<span class="t" style="top:417.75px;font-size:23.8px;color:#217346;left:2030.56px;">P</span>
<span class="t" style="top:417.75px;font-size:23.8px;color:#444;left:2153.74px;">Q</span>
<span class="t" style="top:417.75px;font-size:23.8px;color:#444;left:2278.91px;">R</span>
<span class="t" style="top:417.75px;font-size:23.8px;color:#444;left:2404.06px;">S</span>
<span class="t" style="top:453.65px;font-size:21.8px;color:#444;left:19.74px;">1</span>
<span class="t" style="top:487.53px;font-size:21.8px;color:#444;left:19.74px;">2</span>
<span class="t" style="top:521.41px;font-size:21.8px;color:#444;left:19.74px;">3</span>
<span class="t" style="top:555.29px;font-size:21.8px;color:#444;left:19.74px;">4</span>
<span class="t" style="top:589.17px;font-size:21.8px;color:#444;left:19.74px;">5</span>
<span class="t" style="top:623.05px;font-size:21.8px;color:#444;left:19.74px;">6</span>
<span class="t" style="top:656.93px;font-size:21.8px;color:#444;left:19.74px;">7</span>
<span class="t" style="top:690.81px;font-size:21.8px;color:#444;left:19.74px;">8</span>
<span class="t" style="top:724.69px;font-size:21.8px;color:#444;left:19.74px;">9</span>
<span class="t" style="top:758.57px;font-size:21.8px;color:#444;left:13.68px;">10</span>
<span class="t" style="top:792.45px;font-size:21.8px;color:#444;left:14.48px;">11</span>
<span class="t" style="top:826.33px;font-size:21.8px;color:#217346;left:13.68px;">12</span>
<span class="t" style="top:860.21px;font-size:21.8px;color:#444;left:13.68px;">13</span>
<span class="t" style="top:894.09px;font-size:21.8px;color:#444;left:13.68px;">14</span>
<span class="t" style="top:927.97px;font-size:21.8px;color:#444;left:13.68px;">15</span>
<span class="t" style="top:961.85px;font-size:21.8px;color:#444;left:13.68px;">16</span>
<span class="t" style="top:995.73px;font-size:21.8px;color:#444;left:13.68px;">17</span>
<span class="t" style="top:1029.61px;font-size:21.8px;color:#444;left:13.68px;">18</span>
<span class="t" style="top:1063.49px;font-size:21.8px;color:#444;left:13.68px;">19</span>
<span class="t" style="top:1097.37px;font-size:21.8px;color:#444;left:13.68px;">20</span>
<span class="t" style="top:1131.25px;font-size:21.8px;color:#444;left:13.68px;">21</span>
<span class="t" style="top:1165.13px;font-size:21.8px;color:#444;left:13.68px;">22</span>
<span class="t" style="top:1199.01px;font-size:21.8px;color:#444;left:13.68px;">23</span>
<span class="t" style="top:1232.89px;font-size:21.8px;color:#444;left:13.68px;">24</span>
<span class="t" style="top:1266.77px;font-size:21.8px;color:#444;left:13.68px;">25</span>
<span class="t" style="top:1300.65px;font-size:21.8px;color:#444;left:13.68px;">26</span>
<div style="left:51.2px;top:445.90000000000003px;width:305.8px;height:33.59999999999999px;background:#306eba;"></div>
<span class="t" style="top:452.79px;font-size:23.4px;color:#fff;left:56.50px;letter-spacing:0.499px;">Mês</span>
<span class="t" style="top:452.79px;font-size:23.4px;color:#fff;left:181.00px;letter-spacing:0.999px;">Farturamento</span>
<span class="t" style="top:486.87px;font-size:23.4px;color:#000;left:55.30px;letter-spacing:0.269px;">Janeiro</span>
<span class="t" style="top:486.87px;font-size:23.4px;color:#000;left:188.60px;letter-spacing:-0.653px;">R$</span>
<span class="t" style="top:486.87px;font-size:23.4px;color:#000;left:233.50px;letter-spacing:0.819px;">11.000,00</span>
<span class="t" style="top:520.75px;font-size:23.4px;color:#000;left:55.30px;letter-spacing:0.500px;">Fevereiro</span>
<span class="t" style="top:520.75px;font-size:23.4px;color:#000;left:188.60px;letter-spacing:-0.653px;">R$</span>
<span class="t" style="top:520.75px;font-size:23.4px;color:#000;left:233.50px;letter-spacing:0.626px;">10.448,00</span>
<span class="t" style="top:554.63px;font-size:23.4px;color:#000;left:55.30px;letter-spacing:1.280px;">Março</span>
<span class="t" style="top:554.63px;font-size:23.4px;color:#000;left:188.60px;letter-spacing:-0.653px;">R$</span>
<span class="t" style="top:554.63px;font-size:23.4px;color:#000;left:233.50px;letter-spacing:0.626px;">12.264,00</span>
<span class="t" style="top:588.51px;font-size:23.4px;color:#000;left:55.30px;letter-spacing:0.701px;">Abril</span>
<span class="t" style="top:588.51px;font-size:23.4px;color:#000;left:188.60px;letter-spacing:-0.653px;">R$</span>
<span class="t" style="top:588.51px;font-size:23.4px;color:#000;left:233.50px;letter-spacing:0.819px;">11.969,00</span>
<span class="t" style="top:622.39px;font-size:23.4px;color:#000;left:55.30px;letter-spacing:1.574px;">Maio</span>
<span class="t" style="top:622.39px;font-size:23.4px;color:#000;left:188.60px;letter-spacing:-0.653px;">R$</span>
<span class="t" style="top:622.39px;font-size:23.4px;color:#000;left:233.50px;letter-spacing:0.626px;">12.922,00</span>
<span class="t" style="top:656.27px;font-size:23.4px;color:#000;left:55.30px;letter-spacing:0.293px;">Junho</span>
<span class="t" style="top:656.27px;font-size:23.4px;color:#000;left:188.60px;letter-spacing:-0.653px;">R$</span>
<span class="t" style="top:656.27px;font-size:23.4px;color:#000;left:233.50px;letter-spacing:0.626px;">13.995,00</span>
<span class="t" style="top:690.15px;font-size:23.4px;color:#000;left:55.30px;letter-spacing:0.096px;">Julho</span>
<span class="t" style="top:690.15px;font-size:23.4px;color:#000;left:188.60px;letter-spacing:-0.653px;">R$</span>
<span class="t" style="top:690.15px;font-size:23.4px;color:#000;left:233.50px;letter-spacing:0.626px;">13.719,00</span>
<span class="t" style="top:724.03px;font-size:23.4px;color:#000;left:55.30px;letter-spacing:0.529px;">Agosto</span>
<span class="t" style="top:724.03px;font-size:23.4px;color:#000;left:188.60px;letter-spacing:-0.653px;">R$</span>
<span class="t" style="top:724.03px;font-size:23.4px;color:#000;left:233.50px;letter-spacing:0.626px;">12.778,00</span>
<span class="t" style="top:757.91px;font-size:23.4px;color:#000;left:55.30px;letter-spacing:0.822px;">Setembro</span>
<span class="t" style="top:791.79px;font-size:23.4px;color:#000;left:55.30px;letter-spacing:1.210px;">Outubro</span>
<span class="t" style="top:825.67px;font-size:23.4px;color:#000;left:55.30px;letter-spacing:1.262px;">Novembro</span>
<span class="t" style="top:859.55px;font-size:23.4px;color:#000;left:55.30px;letter-spacing:0.824px;">Dezembro</span>
<svg style="left:0;top:0" width="2564" height="1444"><path d="M51.2 479.50 H357.1 M51.2 513.50 H357.1 M51.2 546.50 H357.1 M51.2 580.50 H357.1 M51.2 614.50 H357.1 M51.2 648.50 H357.1 M51.2 682.50 H357.1 M51.2 716.50 H357.1 M51.2 750.50 H357.1 M51.2 784.50 H357.1 M51.2 817.50 H357.1 M51.2 851.50 H357.1 M51.2 885.50 H357.1 M51.5 479.50 V885.50 M175.5 479.50 V885.50 M356.5 479.50 V885.50" stroke="#2b2b2b" stroke-width="1.3" fill="none"/><path d="M51.2 886.80 H357.1" stroke="#8a8a8a" stroke-width="1.2"/></svg>
<div style="left:1974.2px;top:815.8px;width:128.3px;height:37.2px;box-sizing:border-box;border:2.2px solid #2a6b3d;"></div>
<div style="left:2095.9px;top:846.7px;width:7.3px;height:7.1px;background:#fff;"></div>
<div style="left:2097px;top:847.8px;width:6.2px;height:6px;background:#33703f;"></div>
<div style="left:379.3px;top:445.3px;width:1125.3px;height:646.9000000000001px;box-sizing:border-box;background:#fff;border:1.3px solid #d9d9d9;"></div>
<span class="t" style="top:468.21px;font-size:30px;color:#595959;left:791.00px;letter-spacing:0.783px;">Farturamento mensal</span>
<span class="t" style="top:970.34px;font-size:19.8px;color:#595959;left:474.50px;letter-spacing:-0.719px;">R$ -</span>
<span class="t" style="top:920.67px;font-size:19.8px;color:#595959;left:412.00px;letter-spacing:-0.045px;">R$ 2.000,00</span>
<span class="t" style="top:871.00px;font-size:19.8px;color:#595959;left:412.00px;letter-spacing:-0.045px;">R$ 4.000,00</span>
<span class="t" style="top:821.33px;font-size:19.8px;color:#595959;left:412.00px;letter-spacing:-0.045px;">R$ 6.000,00</span>
<span class="t" style="top:771.66px;font-size:19.8px;color:#595959;left:412.00px;letter-spacing:-0.045px;">R$ 8.000,00</span>
<span class="t" style="top:721.99px;font-size:19.8px;color:#595959;left:400.50px;letter-spacing:0.000px;">R$ 10.000,00</span>
<span class="t" style="top:672.32px;font-size:19.8px;color:#595959;left:400.50px;letter-spacing:0.000px;">R$ 12.000,00</span>
<span class="t" style="top:622.65px;font-size:19.8px;color:#595959;left:400.50px;letter-spacing:0.000px;">R$ 14.000,00</span>
<span class="t" style="top:572.98px;font-size:19.8px;color:#595959;left:400.50px;letter-spacing:0.000px;">R$ 16.000,00</span>
<span class="t" style="top:523.31px;font-size:19.8px;color:#595959;left:400.50px;letter-spacing:0.000px;">R$ 18.000,00</span>
<div style="left:544px;top:978.6999999999999px;width:932px;height:1.3px;background:#d9d9d9;"></div>
<svg style="left:0;top:0" width="2564" height="1444"><g fill="#4f72be"><rect x="571.13" y="706.12" width="24.6" height="273.19"/><rect x="648.80" y="719.82" width="24.6" height="259.48"/><rect x="726.47" y="674.72" width="24.6" height="304.58"/><rect x="804.14" y="682.05" width="24.6" height="297.25"/><rect x="881.81" y="658.38" width="24.6" height="320.92"/><rect x="959.48" y="631.73" width="24.6" height="347.57"/><rect x="1037.15" y="638.59" width="24.6" height="340.71"/><rect x="1114.83" y="661.96" width="24.6" height="317.34"/></g><path d="M583 708.2 L1438 594.2" stroke="#b92a1e" stroke-width="1.6" stroke-linecap="round" stroke-dasharray="3.8 4.8" fill="none"/></svg>
<span class="t" style="top:551.64px;font-size:19.8px;color:#4472c4;font-weight:700;left:1233.00px;letter-spacing:-0.085px;">y = 416,04x + 10515</span>
<div style="left:283.63px;top:991.40px;width:300px;height:24px;transform:rotate(-45deg);transform-origin:100% 50%;text-align:right;font-size:19.6px;line-height:24px;color:#595959;white-space:pre;letter-spacing:-0.1px;">Janeiro</div>
<div style="left:361.30px;top:991.40px;width:300px;height:24px;transform:rotate(-45deg);transform-origin:100% 50%;text-align:right;font-size:19.6px;line-height:24px;color:#595959;white-space:pre;letter-spacing:-0.1px;">Fevereiro</div>
<div style="left:438.97px;top:991.40px;width:300px;height:24px;transform:rotate(-45deg);transform-origin:100% 50%;text-align:right;font-size:19.6px;line-height:24px;color:#595959;white-space:pre;letter-spacing:-0.1px;">Março</div>
<div style="left:516.64px;top:991.40px;width:300px;height:24px;transform:rotate(-45deg);transform-origin:100% 50%;text-align:right;font-size:19.6px;line-height:24px;color:#595959;white-space:pre;letter-spacing:-0.1px;">Abril</div>
<div style="left:594.31px;top:991.40px;width:300px;height:24px;transform:rotate(-45deg);transform-origin:100% 50%;text-align:right;font-size:19.6px;line-height:24px;color:#595959;white-space:pre;letter-spacing:-0.1px;">Maio</div>
<div style="left:671.98px;top:991.40px;width:300px;height:24px;transform:rotate(-45deg);transform-origin:100% 50%;text-align:right;font-size:19.6px;line-height:24px;color:#595959;white-space:pre;letter-spacing:-0.1px;">Junho</div>
<div style="left:749.65px;top:991.40px;width:300px;height:24px;transform:rotate(-45deg);transform-origin:100% 50%;text-align:right;font-size:19.6px;line-height:24px;color:#595959;white-space:pre;letter-spacing:-0.1px;">Julho</div>
<div style="left:827.33px;top:991.40px;width:300px;height:24px;transform:rotate(-45deg);transform-origin:100% 50%;text-align:right;font-size:19.6px;line-height:24px;color:#595959;white-space:pre;letter-spacing:-0.1px;">Agosto</div>
<div style="left:905.00px;top:991.40px;width:300px;height:24px;transform:rotate(-45deg);transform-origin:100% 50%;text-align:right;font-size:19.6px;line-height:24px;color:#595959;white-space:pre;letter-spacing:-0.1px;">Setembro</div>
<div style="left:982.66px;top:991.40px;width:300px;height:24px;transform:rotate(-45deg);transform-origin:100% 50%;text-align:right;font-size:19.6px;line-height:24px;color:#595959;white-space:pre;letter-spacing:-0.1px;">Outubro</div>
<div style="left:1060.33px;top:991.40px;width:300px;height:24px;transform:rotate(-45deg);transform-origin:100% 50%;text-align:right;font-size:19.6px;line-height:24px;color:#595959;white-space:pre;letter-spacing:-0.1px;">Novembro</div>
<div style="left:1138.00px;top:991.40px;width:300px;height:24px;transform:rotate(-45deg);transform-origin:100% 50%;text-align:right;font-size:19.6px;line-height:24px;color:#595959;white-space:pre;letter-spacing:-0.1px;">Dezembro</div>
<div style="left:1553.2px;top:594.8px;width:492.5px;height:159px;box-sizing:border-box;background:#fff;border:3.7px solid #1c2a78;"></div>
<div style="left:1220px;top:833px;width:493.2px;height:69px;box-sizing:border-box;background:#fff;border:3.7px solid #1c2a78;"></div>
<span class="t" style="top:613.01px;font-size:33.3px;color:#000;left:1633.00px;letter-spacing:1.013px;">Equação da Linha de</span>
<span class="t" style="top:658.01px;font-size:33.3px;color:#000;left:1619.50px;letter-spacing:1.111px;">Tendência para fins de</span>
<span class="t" style="top:702.81px;font-size:33.3px;color:#000;left:1733.00px;letter-spacing:1.018px;">previsão</span>
<span class="t" style="top:849.81px;font-size:33.3px;color:#000;left:1312.50px;letter-spacing:1.071px;">Linha de Tendência</span>
<svg style="left:0;top:0" width="2564" height="1444"><path d="M1554.5 597.5 L1437.55 566.46" stroke="#1c2a78" stroke-width="3.6" fill="none"/><path d="M1424.5 563 L1441.48 559.44 L1437.48 574.51 Z" fill="#1c2a78"/><path d="M1222.5 835.5 L1182.29 645.21" stroke="#1c2a78" stroke-width="3.6" fill="none"/><path d="M1179.5 632 L1190.34 645.55 L1175.07 648.78 Z" fill="#1c2a78"/></svg>
<div style="left:1997.5px;top:1080.5px;width:527.7px;height:247.5px;background:#fff;"></div>
<svg style="left:2036px;top:1137px" width="142" height="144" viewBox="0 0 142 144" fill="none" stroke="#1b2a75" stroke-width="4" stroke-linecap="round" stroke-linejoin="round"><g transform="translate(80 72) scale(0.978) translate(-80 -72)">
<path d="M20.6 74 V33.5 Q20.6 26.7 27.5 26.7 H41.5"/>
<path d="M51.5 26.7 H101"/>
<path d="M121.5 26.7 H131.5 Q138.6 26.7 138.6 34 V103 Q138.6 112.6 129 112.6 H48"/>
<path d="M48 92.1 H138.6"/>
<path d="M69 112.6 V127.5 M91.6 112.6 V127.5"/>
<rect x="52.4" y="127.5" width="54.2" height="11" rx="5.5"/>
<path d="M39.4 75 V43 Q39.4 36.8 46.5 36.8 Q53.6 36.8 53.6 43 V79 Q53.6 85.5 48 85.5"/>
<rect x="60.2" y="53.3" width="15.8" height="32.2" rx="6.5"/>
<rect x="81.8" y="41.3" width="16.1" height="44.2" rx="6.5"/>
<path d="M103.5 19.1 V78 Q103.5 85.5 111 85.5 Q118.4 85.5 118.4 78 V74 M118.4 66 V19.1 H125.4 L111.3 2.2 L97.2 19.1 H103.5"/>
<path d="M11 138.5 H1.8 V75 H47.6 V138.5 H18.5" fill="#fff"/>
<circle cx="25.2" cy="97.3" r="13.2"/>
<path d="M25.2 90.8 A6.5 6.5 0 1 1 19.2 99.8 M18.9 95 L22.5 90.5" stroke-width="3.2"/>
<path d="M13.5 118.6 H37 M13.5 127.6 H37"/>
</g></svg>
<span class="t" style="top:1155.60px;font-size:33.2px;color:#1b2a75;font-weight:700;left:2198.00px;letter-spacing:-0.584px;">VENDA MAIS COM</span>
<span class="t" style="top:1189.91px;font-size:90px;color:#1b2a75;font-weight:700;left:2199.70px;letter-spacing:-9.086px;">DADOS</span>
<div style="left:1px;top:1328px;width:2560px;height:56.3px;background:#e9eef3;"></div>
<div style="left:2528.4px;top:411.7px;width:34px;height:917px;background:#e9eef3;"></div>
<div style="left:2530.5px;top:412px;width:30.5px;height:917.7px;background:#f5f5f5;border-radius:15px;"></div>
<div style="left:2538.8px;top:442px;width:15.4px;height:823.5px;background:#737373;border-radius:7.7px;"></div>
<svg style="left:2536px;top:419px" width="22" height="16" viewBox="0 0 22 16" ><path d="M3.4 14 Q1.6 14 2.8 12.2 L9.6 2.8 Q10.5 1.6 11.4 2.8 L18.2 12.2 Q19.4 14 17.6 14 Z" fill="#737373"/></svg>
<svg style="left:2536px;top:1307px" width="22" height="16" viewBox="0 0 22 16" ><path d="M3.4 2 Q1.6 2 2.8 3.6 L9.6 12.9 Q10.5 14.1 11.4 12.9 L18.2 3.6 Q19.4 2 17.6 2 Z" fill="#737373"/></svg>
<svg style="left:190px;top:1327.5px" width="160" height="52" viewBox="0 0 160 52"><path d="M0 0.5 H160 C153 0.5 150.3 3.5 150.3 9 V43.5 Q150.3 50.3 143.5 50.3 H15 Q8.2 50.3 8.2 43.5 V9 C8.2 3.5 6 0.5 0 0.5 Z" fill="#fff"/><path d="M8.6 40 V43.5 Q8.6 50.3 15 50.3 H143.5 Q150 50.3 150 40" fill="none" stroke="#d5d8dc" stroke-width="1"/></svg>
<span class="t" style="top:1338.71px;font-size:25.5px;color:#1b1b1b;font-weight:700;left:214.00px;letter-spacing:-0.330px;">Planilha1</span>
<div style="left:213px;top:1368.5px;width:112px;height:3.5px;background:#2c7a40;"></div>
<svg style="left:35.5px;top:1345px" width="14" height="20" viewBox="0 0 14 20" ><path d="M11.5 1.5 L2.5 10 L11.5 18.5" fill="none" stroke="#8a8a8a" stroke-width="1.8"/></svg>
<svg style="left:96px;top:1345px" width="14" height="20" viewBox="0 0 14 20" ><path d="M2.5 1.5 L11.5 10 L2.5 18.5" fill="none" stroke="#8a8a8a" stroke-width="1.8"/></svg>
<div style="left:347.3px;top:1340px;width:1.6px;height:32px;background:#c3c5c8;"></div>
<svg style="left:426px;top:1344px" width="22" height="22" viewBox="0 0 22 22" ><path d="M11 1 V21 M1 11 H21" stroke="#333" stroke-width="1.9" fill="none"/></svg>
<div style="left:1545.3px;top:1347.5px;width:3.4px;height:3.4px;background:#333;"></div>
<div style="left:1545.3px;top:1354.5px;width:3.4px;height:3.4px;background:#333;"></div>
<div style="left:1545.3px;top:1361.5px;width:3.4px;height:3.4px;background:#333;"></div>
<div style="left:1577px;top:1340.6px;width:953px;height:30.2px;background:#f5f5f5;border-radius:15px;"></div>
<svg style="left:1584px;top:1346.6px" width="16" height="18" viewBox="0 0 16 18" ><path d="M14.4 2.6 Q14.4 0.6 12.7 1.6 L2.8 8 Q1.6 9 2.8 10 L12.7 16.4 Q14.4 17.4 14.4 15.4 Z" fill="#737373"/></svg>
<svg style="left:2507px;top:1346.6px" width="16" height="18" viewBox="0 0 16 18" ><path d="M1.6 2.6 Q1.6 0.6 3.3 1.6 L13.2 8 Q14.4 9 13.2 10 L3.3 16.4 Q1.6 17.4 1.6 15.4 Z" fill="#737373"/></svg>
<div style="left:1608.5px;top:1348.3px;width:843.3px;height:14.7px;background:#737373;border-radius:7.4px;"></div>
<div style="left:1px;top:1384.3px;width:2560px;height:55.5px;background:linear-gradient(#fbfbfb 0,#f4f4f4 4%,#f3f3f3 88%,#e4e4e4 100%);"></div>
<span class="t" style="top:1405.15px;font-size:19.9px;color:#333;left:25.40px;letter-spacing:-0.085px;">Pronto</span>
<svg style="left:139px;top:1400px" width="30" height="28" viewBox="0 0 30 28" ><g fill="none" stroke="#2b2b2b" stroke-width="1.8" stroke-linecap="round" stroke-linejoin="round">
<circle cx="12.85" cy="4.7" r="3.05"/>
<path d="M9.9 7 L4.3 4.9 Q2.2 4.3 1.8 6.3 Q1.6 7.9 3.4 8.6 L8 10.5 L8.2 15 L5.6 22.6 Q5.1 24.9 7.2 25.4 Q9 25.7 9.9 23.8 L12 18.3 Q12.9 16.5 13.8 18.3 L14.8 20.8"/>
<path d="M9.9 7 Q12.85 9.3 15.8 7 L21.4 4.9 Q23.5 4.3 23.9 6.3 Q24.1 7.9 22.3 8.6 L17.5 10.5"/>
<path d="M15.3 13.6 L27.4 24.8 M27.3 13.5 L15.2 24.6" stroke-width="1.6" stroke-linecap="butt"/></g></svg>
<span class="t" style="top:1405.15px;font-size:19.9px;color:#333;left:174.10px;letter-spacing:-0.171px;">Acessibilidade: investigar</span>
<div style="left:1982px;top:1385.5px;width:77.1px;height:54.3px;background:linear-gradient(#e0e0e0 0,#dfdfdf 60%,#d4d4d4 100%);"></div>
<svg style="left:2007.2px;top:1401.4px" width="24.2" height="22.9" viewBox="0 0 24.2 22.9" ><rect x="1.1" y="1.1" width="22" height="20.7" fill="#f2f2f2" stroke="#2b2b2b" stroke-width="2.2"/><path d="M8.5 1 V22 M15.8 1 V22 M1 8.1 H23 M1 14.9 H23" stroke="#2b2b2b" stroke-width="2"/></svg>
<svg style="left:2084.4px;top:1401.4px" width="26" height="22.9" viewBox="0 0 26 22.9" ><rect x="1.1" y="1.1" width="23.8" height="20.7" fill="#fff" stroke="#2b2b2b" stroke-width="2.2"/><rect x="6.7" y="4.7" width="12.8" height="13.6" fill="#fff" stroke="#2b2b2b" stroke-width="2.1"/><path d="M9.8 8.1 H16.6 M9.8 11.5 H16.6 M9.8 15 H16.6" stroke="#2b2b2b" stroke-width="1.5"/></svg>
<svg style="left:2161.6px;top:1401.4px" width="26.2" height="22.9" viewBox="0 0 26.2 22.9" ><rect x="1.1" y="1.1" width="24" height="20.7" fill="#fff" stroke="#2b2b2b" stroke-width="2.2"/><path d="M8.5 1 V13.4 M15.5 1 V13.4 H1" fill="none" stroke="#2b2b2b" stroke-width="2.1"/></svg>
<div style="left:2223.4px;top:1411.7px;width:14.2px;height:1.5px;background:#666;"></div>
<div style="left:2248.3px;top:1411.7px;width:183.8px;height:2.6px;background:#6a6a6a;"></div>
<div style="left:2335.6px;top:1403.2px;width:9.5px;height:19.8px;background:#666;"></div>
<svg style="left:2441.3px;top:1405.4px" width="15" height="15" viewBox="0 0 15 15" ><path d="M7.4 0.5 V14.1 M0.5 7.3 H14.2" stroke="#5a5a5a" stroke-width="1.5"/></svg>
<span class="t" style="top:1405.15px;font-size:19.9px;color:#333;left:2491.00px;letter-spacing:-0.644px;">100%</span>
<div style="left:2561px;top:1px;width:1.2px;height:1442px;background:#c2c2c2;"></div>
<div style="left:2562.2px;top:0px;width:1.8px;height:1444px;background:#e8edf2;"></div>
<div style="left:0px;top:1439.7px;width:2562px;height:3px;background:linear-gradient(#cfcfcf,#bdbdbd);"></div>
<div style="left:0px;top:1442.7px;width:2564px;height:1.3px;background:#e8edf2;"></div>
</body></html>
